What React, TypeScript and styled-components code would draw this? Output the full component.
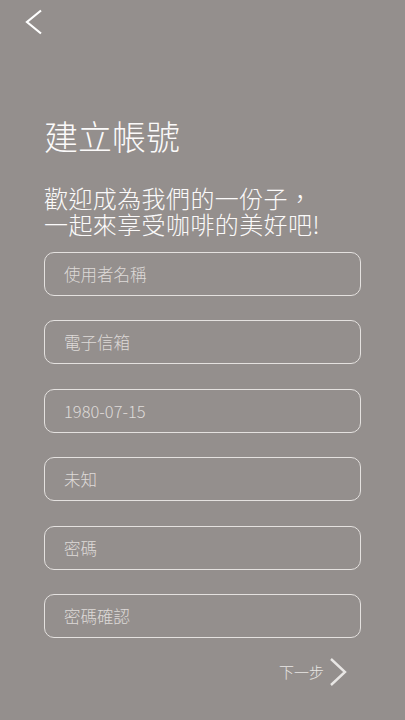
import React from 'react'
import styled, { createGlobalStyle } from 'styled-components'

const GlobalStyle = createGlobalStyle`
  html, body {
    margin: 0;
    padding: 0;
    background: #948f8d;
  }
  * {
    box-sizing: border-box;
  }
`

const Page = styled.div`
  width: 405px;
  min-height: 720px;
  background: #948f8d;
  font-family: 'Noto Sans CJK TC', 'Noto Sans', sans-serif;
  font-weight: 300;
  color: #fbfafa;
  display: flex;
  flex-direction: column;
`

const TopBar = styled.div`
  height: 44px;
  display: flex;
  align-items: center;
  padding-left: 24px;
`

const IconButton = styled.button`
  background: none;
  border: none;
  padding: 0;
  display: flex;
  align-items: center;
  color: inherit;
  cursor: pointer;
`

const Content = styled.div`
  padding: 0 44px;
  display: flex;
  flex-direction: column;
`

const Title = styled.h1`
  margin: 72px 0 0;
  font-size: 34px;
  line-height: 40px;
  font-weight: 300;
`

const Subtitle = styled.p`
  margin: 29px 0 0;
  font-size: 24px;
  line-height: 26px;
  font-weight: 300;
  letter-spacing: 0.4px;
  white-space: nowrap;
`

const Form = styled.div`
  margin-top: 15px;
  display: flex;
  flex-direction: column;
  gap: 24.4px;
`

const Field = styled.input`
  height: 44px;
  width: 100%;
  border: 1px solid #e4e1df;
  border-radius: 10px;
  background: transparent;
  padding: 0 0 0 19px;
  font-family: inherit;
  font-weight: 300;
  font-size: 16.5px;
  color: #ddd9d7;
  outline: none;

  &::placeholder {
    color: #dedad8;
  }
`

const Footer = styled.div`
  margin-top: 20px;
  display: flex;
  justify-content: flex-end;
  padding-right: 58px;
`

const NextButton = styled.button`
  background: none;
  border: none;
  padding: 0;
  display: flex;
  align-items: center;
  gap: 5px;
  font-family: inherit;
  font-weight: 300;
  font-size: 15px;
  color: #e8e6e4;
  cursor: pointer;
`

const fields = ['使用者名稱', '電子信箱', '1980-07-15', '未知', '密碼', '密碼確認']

export default function App() {
  return (
    <Page>
      <GlobalStyle />
      <TopBar>
        <IconButton aria-label="返回">
          <svg width="20" height="26" viewBox="0 0 20 26">
            <path d="M17 1.5 L3 13 L17 24.5" fill="none" stroke="#ffffff" strokeWidth="2.2" />
          </svg>
        </IconButton>
      </TopBar>
      <Content>
        <Title>建立帳號</Title>
        <Subtitle>
          歡迎成為我們的一份子，
          <br />
          一起來享受咖啡的美好吧!
        </Subtitle>
        <Form>
          {fields.map((f) => (
            <Field key={f} placeholder={f} type={f.startsWith('密碼') ? 'password' : 'text'} />
          ))}
        </Form>
      </Content>
      <Footer>
        <NextButton>
          下一步
          <svg width="18" height="28" viewBox="0 0 18 28">
            <path d="M2 1 L16 14 L2 27" fill="none" stroke="#e8e6e4" strokeWidth="2.4" />
          </svg>
        </NextButton>
      </Footer>
    </Page>
  )
}
